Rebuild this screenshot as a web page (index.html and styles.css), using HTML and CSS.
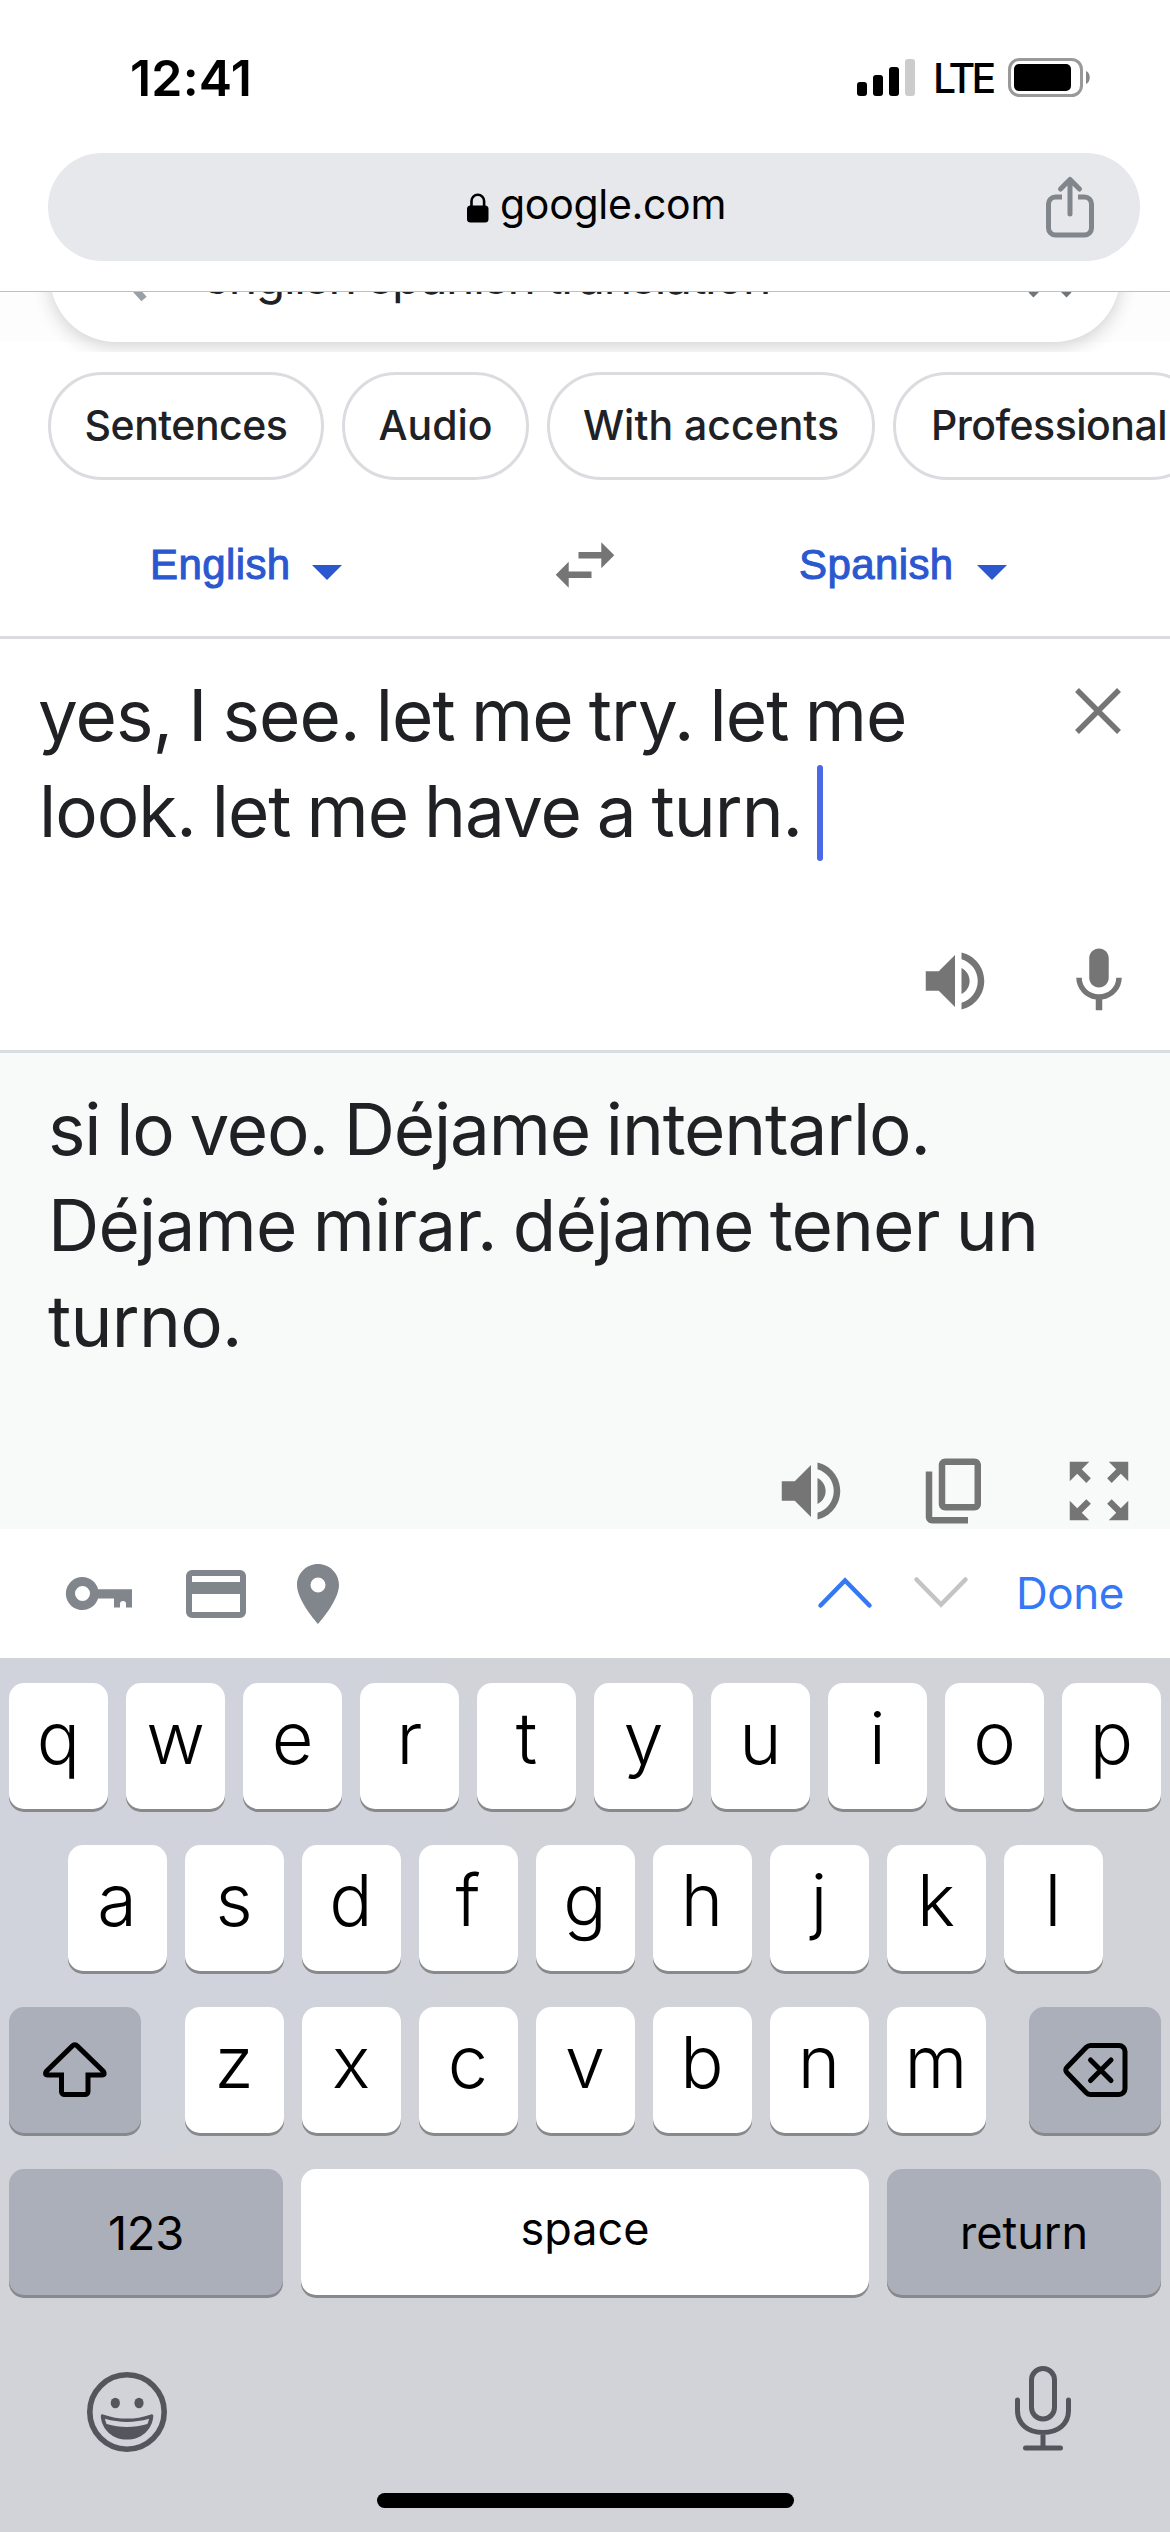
FILE: index.html
```html
<!DOCTYPE html>
<html lang="en">
<head>
<meta charset="utf-8">
<title>english spanish translation</title>
<link rel="stylesheet" href="styles.css">
</head>
<body>
<svg class="defs" width="0" height="0" aria-hidden="true">
  <symbol id="volume" viewBox="0 0 24 24"><path d="M3 9v6h4l5 5V4L7 9H3zm13.500 3c0-1.770-1.020-3.290-2.500-4.030v8.050c1.480-.730 2.500-2.250 2.500-4.020zM14 3.230v2.060c2.890.860 5 3.540 5 6.710s-2.110 5.850-5 6.710v2.060c4.010-.910 7-4.490 7-8.770s-2.990-7.860-7-8.770z"/></symbol>
</svg>
<div class="screen">
  <header class="status">
    <div class="time">12:41</div>
    <div class="status-right">
      <svg class="signal" viewBox="0 0 48 38"><rect y="23" width="10" height="14" rx="3"/><rect x="16" y="16" width="10" height="21" rx="3"/><rect x="32" y="8" width="10" height="29" rx="3"/><rect x="48" y="0" width="10" height="37" rx="3" fill="#ccc"/></svg>
      <span class="lte">LTE</span>
      <svg class="battery" viewBox="0 0 83 40"><rect x="1.500" y="1.500" width="72" height="36" rx="10" fill="none" stroke="#999" stroke-width="3"/><rect x="6" y="6" width="57" height="27" rx="5"/><path d="M78 13c5 2 5 11 0 13z" fill="#888"/></svg>
    </div>
  </header>

  <div class="url-bar">
    <div class="url-pill">
      <svg class="lock" viewBox="0 0 22 30"><path d="M4.500 14V8a6.300 6.300 0 0 1 12.600 0v6" fill="none" stroke="#000" stroke-width="2.600"/><rect y="12.500" width="21.500" height="17" rx="3.500"/></svg>
      <span class="url-text">google.com</span>
      <svg class="share" viewBox="0 0 48 61"><g fill="none" stroke="#80868b" stroke-width="5" stroke-linecap="round" stroke-linejoin="round"><path d="M24 37V3M14.500 12 24 2.500 33.500 12"/><path stroke-linecap="butt" d="M16 20H9.500a7 7 0 0 0-7 7v24a7 7 0 0 0 7 7h29a7 7 0 0 0 7-7V27a7 7 0 0 0-7-7H32"/></g></svg>
    </div>
  </div>

  <div class="search-strip">
    <div class="search-box">
      <svg class="magnifier" viewBox="0 0 54 54"><circle cx="20" cy="20" r="15" fill="none" stroke="#9aa0a6" stroke-width="6"/><path d="M31 32 47 50" stroke="#9aa0a6" stroke-width="7"/></svg>
      <span class="query">english spanish translation</span>
      <svg class="clear-query" viewBox="0 0 44 44"><path d="M3 3 41 41M41 3 3 41" stroke="#70757a" stroke-width="7"/></svg>
    </div>
  </div>

  <nav class="chips">
    <span class="chip">Sentences</span>
    <span class="chip chip-audio">Audio</span>
    <span class="chip chip-accents">With accents</span>
    <span class="chip chip-pro">Professional</span>
  </nav>

  <div class="languages">
    <div class="lang lang-from">English<i class="caret"></i></div>
    <svg class="swap" viewBox="0 0 24 24"><path d="M6.990 11L3 15l3.990 4v-3H14v-2H6.990v-3zM21 9l-3.990-4v3H10v2h7.010v3L21 9z"/></svg>
    <div class="lang lang-to">Spanish<i class="caret"></i></div>
  </div>

  <section class="source">
    <div class="source-row">
      <p class="phrase"><span class="s1">yes, I see. let me try. let me</span><br><span class="s2">look. let me have a turn.</span><i class="cursor"></i></p>
      <svg class="close" viewBox="0 0 46 46"><path d="M2 2 44 44M44 2 2 44" stroke="#757575" stroke-width="5.500"/></svg>
    </div>
    <div class="tools">
      <svg class="tool"><use href="#volume"/></svg>
      <svg class="tool" viewBox="0 0 24 24"><path d="M12 14c1.660 0 2.990-1.340 2.990-3L15 5c0-1.660-1.340-3-3-3S9 3.340 9 5v6c0 1.660 1.340 3 3 3zm5.300-3c0 3-2.540 5.100-5.300 5.100S6.700 14 6.700 11H5c0 3.410 2.720 6.230 6 6.720V21h2v-3.280c3.280-.480 6-3.300 6-6.720h-1.700z"/></svg>
    </div>
  </section>

  <section class="target">
    <p class="phrase"><span class="t1">si lo veo. Déjame intentarlo.</span><br><span class="t2">Déjame mirar. déjame tener un</span><br><span class="t3">turno.</span></p>
    <div class="tools">
      <svg class="tool"><use href="#volume"/></svg>
      <svg class="tool" viewBox="0 0 24 24"><path d="M18 2H9c-1.100 0-2 .9-2 2v12c0 1.100.9 2 2 2h9c1.100 0 2-.9 2-2V4c0-1.100-.9-2-2-2zm0 14H9V4h9v12zM3 6h2v14h11v2H5c-1.100 0-2-.9-2-2z"/></svg>
      <svg class="tool" viewBox="0 0 24 24"><g id="arrows"><path id="arrow" d="M3 3h6L6.700 5.300l2.800 2.800-1.400 1.400-2.800-2.800L3 9z"/><use href="#arrow" transform="matrix(-1 0 0 1 24 0)"/></g><use href="#arrows" transform="matrix(1 0 0 -1 0 24)"/></svg>
    </div>
  </section>

  <div class="accessory">
    <svg class="key-icon" viewBox="0 0 66 34"><path fill-rule="evenodd" d="M16.500 0a16.500 16.500 0 0 1 15.600 12.300H66v18.200h-6V27a3 3 0 0 0-6 0v3.500h-6v-9H32.100A16.500 16.500 0 1 1 16.500 0zm0 9a7.500 7.500 0 1 0 0 15 7.500 7.500 0 0 0 0-15z"/></svg>
    <svg class="card-icon" viewBox="0 0 60 48"><path fill-rule="evenodd" d="M6 0h48a6 6 0 0 1 6 6v36a6 6 0 0 1-6 6H6a6 6 0 0 1-6-6V6a6 6 0 0 1 6-6zm0 6v6h48V6zm0 18v18h48V24z"/></svg>
    <svg class="pin-icon" viewBox="5 2 14 20"><path d="M12 2C8.130 2 5 5.130 5 9c0 5.250 7 13 7 13s7-7.750 7-13c0-3.870-3.130-7-7-7zm0 9.500a2.500 2.500 0 0 1 0-5 2.500 2.500 0 0 1 0 5z"/></svg>
    <svg class="chev chev-up" viewBox="0 0 54 31"><path d="M2.500 28.500 27 3.500 51.500 28.500"/></svg>
    <svg class="chev chev-down" viewBox="0 0 54 31"><path d="M2.500 2.500 27 27.500 51.500 2.500"/></svg>
    <span class="done">Done</span>
  </div>

  <div class="keyboard">
    <div class="row"><b class="k">q</b><b class="k">w</b><b class="k">e</b><b class="k">r</b><b class="k">t</b><b class="k">y</b><b class="k">u</b><b class="k">i</b><b class="k">o</b><b class="k">p</b></div>
    <div class="row"><b class="k">a</b><b class="k">s</b><b class="k">d</b><b class="k">f</b><b class="k">g</b><b class="k">h</b><b class="k">j</b><b class="k">k</b><b class="k">l</b></div>
    <div class="row row-ends">
      <b class="k mod side"><svg class="shift" viewBox="0 0 64 56"><path d="M29.500 3.800a3 3 0 0 1 4.600 0L60.500 29.500c1.500 1.800.8 3.500-1.300 3.500H45v16.500a3 3 0 0 1-3 3H21.500a3 3 0 0 1-3-3V33H4.500c-2.100 0-2.800-1.700-1.300-3.500z" fill="none" stroke="#000" stroke-width="5"/></svg></b>
      <div class="row"><b class="k">z</b><b class="k">x</b><b class="k">c</b><b class="k">v</b><b class="k">b</b><b class="k">n</b><b class="k">m</b></div>
      <b class="k mod side"><svg class="delete" viewBox="0 0 65 54"><g fill="none" stroke="#000" stroke-width="5" stroke-linecap="round"><path d="M27.500 2.500H56a6 6 0 0 1 6 6v37a6 6 0 0 1-6 6H27.500c-1.700 0-3-.6-4.200-1.800L3.800 29.500a3.600 3.600 0 0 1 0-5L23.300 4.300c1.200-1.200 2.500-1.800 4.200-1.800z"/><path d="M27.500 17 48 37.500M48 17 27.500 37.500"/></g></svg></b>
    </div>
    <div class="row"><b class="k mod word wide numbers">123</b><b class="k word space">space</b><b class="k mod word wide">return</b></div>
    <div class="dock">
      <svg class="emoji" viewBox="0 0 80 80"><circle cx="40" cy="40" r="37.200" fill="none" stroke="#53565c" stroke-width="5.600"/><ellipse cx="28.300" cy="31" rx="4.600" ry="5.300"/><ellipse cx="52" cy="31" rx="4.600" ry="5.300"/><path fill-rule="evenodd" d="M16 42.400c16 5.600 32 5.600 48 0 1.500-.4 2.500.4 2.300 2C65 58 54 67.500 40 67.500S15 58 13.800 44.400c-.2-1.600.8-2.400 2.200-2zM18 46.800c.3 2 .8 3.600 1.600 5.300 13.500 4 27.300 4 40.800 0 .8-1.700 1.300-3.300 1.600-5.300-14.600 4.200-29.400 4.200-44 0z"/></svg>
      <svg class="dictate" viewBox="0 0 56 85"><g fill="none" stroke="#53565c" stroke-width="5" stroke-linecap="round"><rect x="16.500" y="2.500" width="23" height="50.500" rx="11.500"/><path d="M2.500 34v10.500C2.500 58 13 66.500 28 66.500S53.500 58 53.500 44.500V34M28 67v14M10.500 82h35"/></g></svg>
    </div>
    <div class="home"></div>
  </div>
</div>
</body>
</html>
```
FILE: styles.css
```css
* { box-sizing: border-box; }
body { margin: 0; background: #fff; font-family: Inter, "Liberation Sans", sans-serif; color: #202124; }
svg { display: block; flex: none; overflow: visible; }
.defs { position: absolute; }
.screen { width: 1170px; height: 2532px; overflow: hidden; display: flex; flex-direction: column; background: #fff; }
.screen > * { flex: none; }

/* Status bar */
.status { height: 153px; padding: 2px 79px 0 130px; display: flex; justify-content: space-between; align-items: center; color: #000; }
.time { font-size: 50px; font-weight: 600; letter-spacing: .2px; }
.status-right { display: flex; align-items: center; }
.signal { width: 48px; height: 38px; margin-right: 28px; }
.lte { font-size: 41px; font-weight: 450; letter-spacing: -3.800px; width: 75px; line-height: 50px; }
.battery { width: 83px; height: 40px; }

/* Address bar */
.url-bar { height: 139px; padding: 0 30px 0 48px; border-bottom: 1px solid #bfc0c3; }
.url-pill { height: 108px; border-radius: 54px; background: #e7e8ec; display: flex; align-items: center; padding: 0 46px 0 419px; color: #000; }
.lock { width: 22px; height: 30px; margin-top: 1px; }
.url-text { font-size: 41px; margin-left: 11px; padding-bottom: 6px; letter-spacing: -.3px; }
.share { width: 48px; height: 61px; margin-left: auto; }

/* Scrolled-away search field */
.search-strip { height: 60px; overflow: hidden; padding: 0 50px; background: linear-gradient(#fdfdfd 50px, #fff 50px); }
.search-box { height: 132px; margin-top: -82px; border-radius: 66px; background: #fff; box-shadow: 0 5px 18px rgba(32, 33, 36, .2); display: flex; align-items: center; padding: 0 48px 0 47px; }
.magnifier { width: 54px; height: 54px; }
.query { font-size: 48px; margin-left: 51px; letter-spacing: -1.300px; white-space: nowrap; }
.clear-query { width: 44px; height: 44px; margin-left: auto; }

/* Filter chips */
.chips { height: 128px; padding: 20px 0 0 48px; display: flex; gap: 18px; overflow: hidden; }
.chip { flex: none; width: 276px; height: 108px; border: 3px solid #dadce0; border-radius: 54px; display: flex; align-items: center; justify-content: center; padding-bottom: 2px; font-size: 41px; font-weight: 500; letter-spacing: -.5px; white-space: nowrap; }
.chip-audio { width: 187px; letter-spacing: 0; }
.chip-accents { width: 328px; letter-spacing: 0; }
.chip-pro { width: 312px; }

/* Language pickers */
.languages { height: 159px; border-bottom: 3px solid #dadce0; padding: 13px 163px 0 150px; display: flex; align-items: center; justify-content: space-between; font-family: "Liberation Sans", Arial, sans-serif; font-size: 42px; letter-spacing: .4px; color: #2b57cf; }
.lang { display: flex; align-items: center; -webkit-text-stroke: 1px #2b57cf; }
.lang-from { width: 192px; justify-content: space-between; }
.lang-to { width: 208px; justify-content: space-between; }
.caret { border: 15px solid transparent; border-top-color: #2b57cf; border-bottom: 0; margin-top: 15px; }
.swap { width: 78px; height: 78px; margin-left: 29px; fill: #757575; }

/* Text panes */
.phrase { margin: 0; font-size: 71px; line-height: 96px; white-space: nowrap; word-spacing: -3px; }
.s1 { letter-spacing: -.9px; }
.s2 { letter-spacing: -1px; margin-left: 1px; }
.t1 { letter-spacing: -1.150px; }
.t2 { letter-spacing: -.8px; }
.t3 { letter-spacing: -.7px; }
.source { height: 414px; border-bottom: 3px solid #dadce0; padding: 28px 32px 30px 38px; display: flex; flex-direction: column; justify-content: space-between; }
.source-row { display: flex; justify-content: space-between; padding-right: 17px; }
.close { width: 46px; height: 46px; margin-top: 21px; }
.cursor { display: inline-block; width: 6px; height: 96px; border-radius: 3px; background: #4b68e6; vertical-align: top; margin: 2px 0 -2px 15px; }
.tools { display: flex; justify-content: flex-end; gap: 66px; }
.tool { width: 78px; height: 78px; fill: #757575; }
.target { height: 476px; background: #f8faf9; padding: 28px 32px 0 48px; }
.target .tools { margin-top: 83px; }

/* Form accessory bar */
.accessory { height: 130px; padding: 0 49px 0 66px; border-bottom: 1px solid #d0d1d4; display: flex; align-items: center; fill: #80868b; }
.key-icon { width: 66px; height: 34px; }
.card-icon { width: 60px; height: 48px; margin-left: 54px; }
.pin-icon { width: 42px; height: 60px; margin-left: 51px; }
.chev { width: 54px; height: 31px; margin-top: -2px; fill: none; stroke-width: 4.500px; stroke-linecap: round; }
.chev-up { margin-left: auto; stroke: #3478f6; }
.chev-down { margin-right: 48px; margin-left: 42px; stroke: #c4c4c6; }
.done { width: 105px; padding-bottom: 2px; font-size: 44px; color: #3478f6; letter-spacing: -.5px; white-space: nowrap; }

/* Keyboard */
.keyboard { flex: 1 0 auto; padding: 24px 9px 0; display: flex; flex-direction: column; gap: 36px; background: radial-gradient(ellipse 620px 420px at 0 170px, #d0d3dc 60%, #d2d3d8 100%); }
.row { display: flex; justify-content: center; gap: 18px; }
.row-ends { justify-content: space-between; }
.k { width: 99px; height: 126px; border-radius: 15px; background: #fff; box-shadow: 0 3px 0 #88898d; display: flex; align-items: center; justify-content: center; padding-bottom: 17px; font-size: 72px; font-weight: 350; color: #000; }
.mod { background: #abafba; }
.side { width: 132px; padding: 0; }
.wide { width: 274px; }
.space { width: 568px; }
.word { font-size: 45px; font-weight: 400; padding-bottom: 0; letter-spacing: 0; }
.numbers { font-size: 47px; letter-spacing: -.3px; }
.space.word { padding-bottom: 8px; letter-spacing: 0; }
.shift { width: 64px; height: 56px; }
.delete { width: 65px; height: 54px; }
.dock { height: 86px; margin-top: 34px; padding: 0 90px 0 78px; display: flex; justify-content: space-between; align-items: center; }
.emoji { width: 80px; height: 80px; fill: #53565c; margin-top: 7px; }
.dictate { width: 56px; height: 85px; }
.home { width: 417px; height: 15px; border-radius: 8px; background: #000; align-self: center; margin-top: 6px; }
```
